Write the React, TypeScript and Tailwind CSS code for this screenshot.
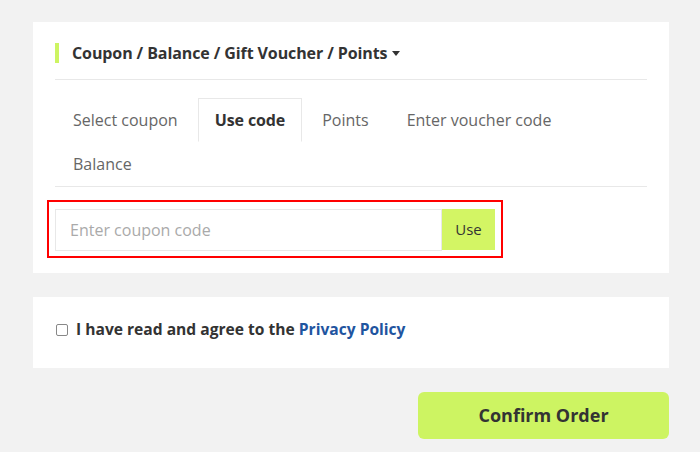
import React from "react";

export default function App() {
  const tabs = ["Select coupon", "Use code", "Points", "Enter voucher code", "Balance"];
  return (
    <div
      className="w-[700px] h-[452px] bg-[#f2f2f2] overflow-hidden pt-[22px] pl-[33px] pr-[31px]"
      style={{ fontFamily: '"Open Sans", "Noto Sans", sans-serif' }}
    >
      <div className="bg-white h-[251px] px-[22px] pt-[21px]">
        <div className="flex items-center h-[20px]">
          <div className="w-[4px] h-[20px] bg-[#cdf462]" />
          <div className="ml-[13px] text-[16px] font-bold text-[#333] leading-none tracking-[-0.1px]">
            Coupon / Balance / Gift Voucher / Points
          </div>
          <div className="ml-[5px] w-0 h-0 border-l-[4px] border-r-[4px] border-t-[5px] border-l-transparent border-r-transparent border-t-[#333]" />
        </div>
        <div className="mt-[16px] border-t border-[#e8e8e8]" />
        <div className="mt-[18px] flex flex-wrap border-b border-[#e8e8e8]">
          {tabs.map((t) => {
            const active = t === "Use code";
            return (
              <div
                key={t}
                className={
                  active
                    ? "h-[44px] px-[16px] mr-[2px] flex items-center text-[16px] font-bold text-[#333] border border-[#e8e8e8] border-b-white bg-white -mb-px tracking-[-0.1px]"
                    : "h-[44px] px-[18px] mr-[2px] flex items-center text-[16px] text-[#666]"
                }
              >
                {t}
              </div>
            );
          })}
        </div>
        <div className="mt-[13px] ml-[-8px] w-[456px] h-[58px] border-2 border-[#f00] p-[6px] pt-[7px]">
          <div className="flex h-[42px]">
            <input
              className="flex-1 border border-[#e8e8e8] px-[14px] text-[16px] text-[#333] placeholder:text-[#aaa] outline-none"
              placeholder="Enter coupon code"
            />
            <button className="w-[53px] h-[41px] bg-[#d3f564] text-[15px] text-[#333]">Use</button>
          </div>
        </div>
      </div>
      <div className="mt-[24px] bg-white h-[71px] flex items-center px-[23px] pb-[5px]">
        <div className="w-[12px] h-[12px] border border-[#888] rounded-[2px] bg-white" />
        <div className="ml-[8px] text-[15.6px] font-bold text-[#333]">
          I have read and agree to the <span className="text-[#1f55a0]">Privacy Policy</span>
        </div>
      </div>
      <div className="mt-[24px] flex justify-end">
        <button className="w-[251px] h-[47px] rounded-[6px] bg-[#cdf462] text-[18px] font-bold text-[#333]">
          Confirm Order
        </button>
      </div>
    </div>
  );
}
